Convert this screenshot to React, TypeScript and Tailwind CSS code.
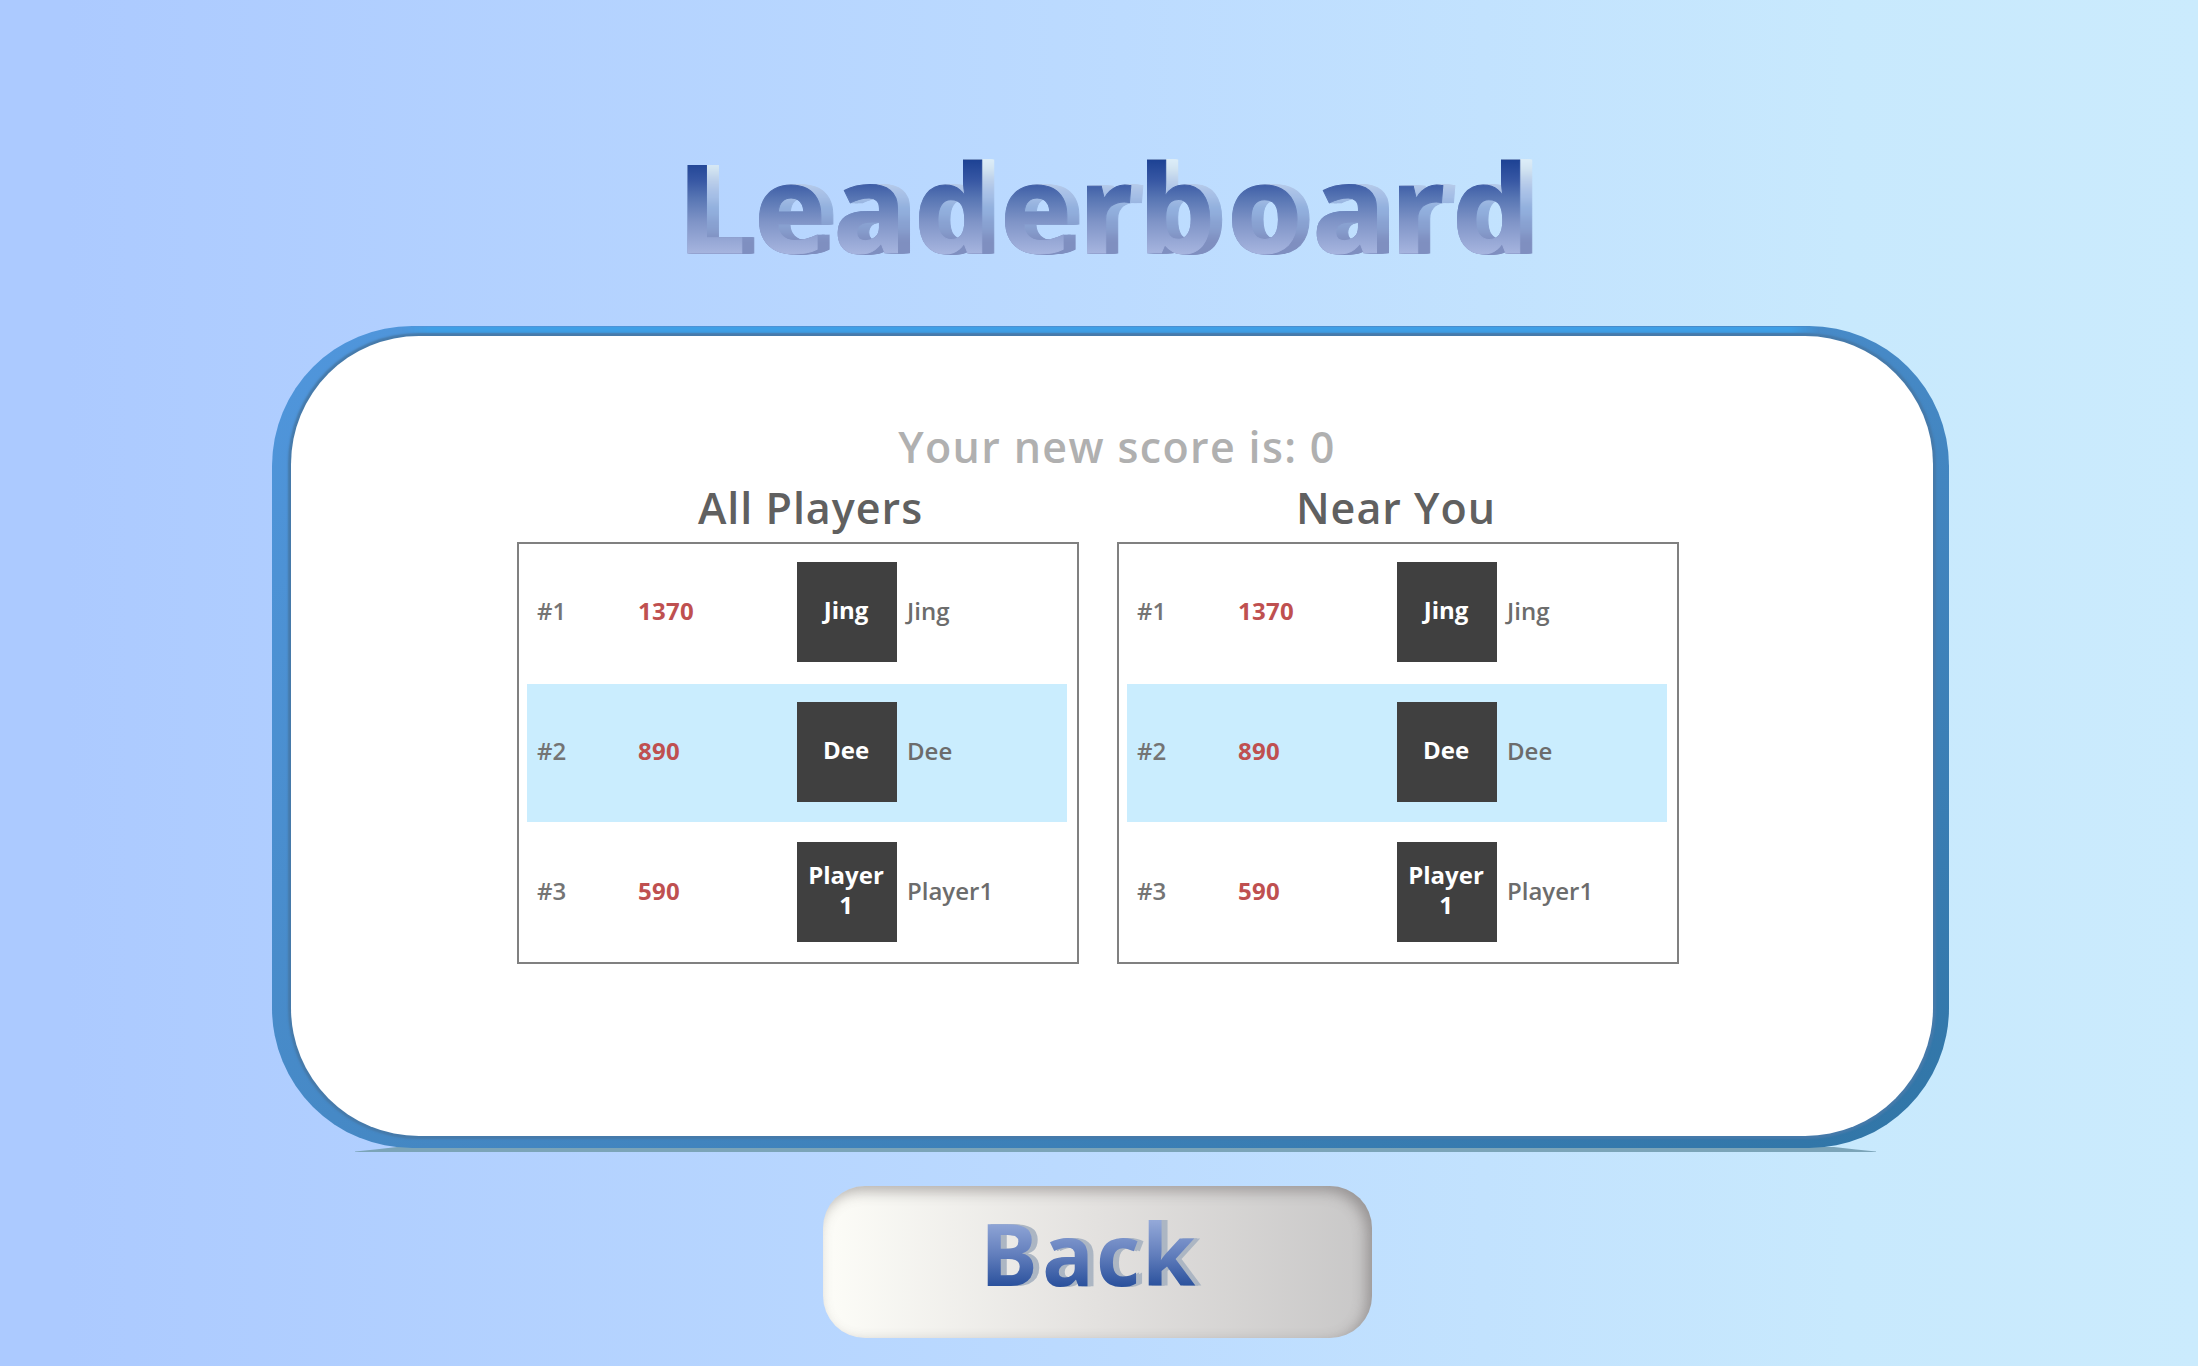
type Player = { rank: string; score: string; avatar: string[]; name: string; highlighted?: boolean };

const players: Player[] = [
  { rank: '#1', score: '1370', avatar: ['Jing'], name: 'Jing' },
  { rank: '#2', score: '890', avatar: ['Dee'], name: 'Dee', highlighted: true },
  { rank: '#3', score: '590', avatar: ['Player', '1'], name: 'Player1' },
];

// Colour bands of the title's side faces, from top to bottom; blurred into a gradient.
const sideBands = [
  { y: -40, h: 56, color: '#dcedf8' },
  { y: 16, h: 10, color: '#cfe1ef' },
  { y: 26, h: 12, color: '#b9cdea' },
  { y: 38, h: 14, color: '#a6bfe6' },
  { y: 52, h: 16, color: '#91afdd' },
  { y: 68, h: 16, color: '#88a0d0' },
  { y: 84, h: 96, color: '#7f8fc0' },
];

function Title() {
  return (
    <svg
      className="h-[176px] w-[880px] overflow-visible font-['Open_Sans',sans-serif] text-[122px] font-bold"
      viewBox="0 -30 880 176"
      role="img"
      aria-label="Leaderboard"
    >
      <defs>
        <linearGradient id="titleFace" gradientUnits="userSpaceOnUse" x1="0" y1="10" x2="0" y2="105">
          <stop offset="0" stopColor="#1d4294" />
          <stop offset="0.22" stopColor="#3858a4" />
          <stop offset="0.4" stopColor="#5775b3" />
          <stop offset="0.65" stopColor="#7f94c7" />
          <stop offset="1" stopColor="#a8b6e0" />
        </linearGradient>
        <filter
          id="titleDepth"
          filterUnits="userSpaceOnUse"
          x="-20"
          y="-40"
          width="920"
          height="220"
          colorInterpolationFilters="sRGB"
        >
          <feOffset in="SourceAlpha" dx="1" result="o1" />
          <feMerge result="w2"><feMergeNode in="SourceAlpha" /><feMergeNode in="o1" /></feMerge>
          <feOffset in="w2" dx="2" result="o2" />
          <feMerge result="w4"><feMergeNode in="w2" /><feMergeNode in="o2" /></feMerge>
          <feOffset in="w4" dx="4" result="o4" />
          <feMerge result="w8"><feMergeNode in="w4" /><feMergeNode in="o4" /></feMerge>
          <feOffset in="w8" dx="5" result="o5" />
          <feMerge result="extruded"><feMergeNode in="w8" /><feMergeNode in="o5" /></feMerge>
          {sideBands.map((b, i) => (
            <feFlood key={b.y} x="-20" y={b.y} width="920" height={b.h} floodColor={b.color} result={`band${i}`} />
          ))}
          <feMerge result="bands">
            {sideBands.map((b, i) => (
              <feMergeNode key={b.y} in={`band${i}`} />
            ))}
          </feMerge>
          <feGaussianBlur in="bands" stdDeviation="0 5" result="ramp" />
          <feComposite in="ramp" in2="extruded" operator="in" result="side" />
          <feMerge><feMergeNode in="side" /><feMergeNode in="SourceGraphic" /></feMerge>
        </filter>
      </defs>
      <text
        x="1 78 157 238 324 402 462 551 636 714 776"
        y="103"
        fill="url(#titleFace)"
        stroke="url(#titleFace)"
        strokeWidth="1"
        filter="url(#titleDepth)"
      >
        Leaderboard
      </text>
    </svg>
  );
}

function BackButton() {
  return (
    <button className="h-[152px] w-[549px] rounded-[42px] bg-linear-to-r from-[#fdfdf8] via-[#e3e1df] via-50% to-[#c8c7c7] shadow-[inset_-5px_5px_14px_rgba(80,74,74,0.42)]">
      <svg
        className="h-full w-full overflow-visible font-['Open_Sans',sans-serif] text-[86px] font-bold"
        viewBox="0 0 549 152"
        role="img"
        aria-label="Back"
      >
        <defs>
          <linearGradient id="backFace" gradientUnits="userSpaceOnUse" x1="0" y1="35" x2="0" y2="101">
            <stop offset="0" stopColor="#93a8d8" />
            <stop offset="0.5" stopColor="#637fbd" />
            <stop offset="1" stopColor="#29509c" />
          </linearGradient>
        </defs>
        <text
          className="[filter:drop-shadow(3px_0_0_#acb6c3)_drop-shadow(3px_0_0_#acb6c3)]"
          x="157 219 273 319"
          y="100"
          fill="url(#backFace)"
        >
          Back
        </text>
      </svg>
    </button>
  );
}

function Board({ title, titleClass }: { title: string; titleClass: string }) {
  return (
    <section className="w-[562px]">
      <h2
        className={`h-[59px] text-center text-[43px] leading-[49px] font-semibold tracking-[1px] text-[#606060] ${titleClass}`}
      >
        {title}
      </h2>
      <div className="h-[422px] border-2 border-[#808080] pr-[10px] pl-2">
        {players.map((p) => (
          <div key={p.rank} className="flex h-[140px] items-start">
            <div
              className={`grid h-[138px] w-full grid-cols-[101px_159px_100px_1fr] items-center pl-[10px] ${
                p.highlighted ? 'bg-[#caedfe]' : ''
              }`}
            >
              <span className="pb-1 text-[24px] font-semibold text-[#747474]">{p.rank}</span>
              <span className="pb-1 text-[24px] font-bold tracking-[0.3px] text-[#bf5050]">{p.score}</span>
              <div className="mb-0.5 flex h-[100px] flex-col items-center justify-center bg-[#404040] pr-0.5 pb-1 text-[24px] leading-[30px] font-bold text-white">
                {p.avatar.map((line) => (
                  <span key={line}>{line}</span>
                ))}
              </div>
              <span className="pb-1 pl-[10px] text-[24px] font-semibold text-[#6c6c6c]">{p.name}</span>
            </div>
          </div>
        ))}
      </div>
    </section>
  );
}

export default function App() {
  return (
    <main className="flex h-[1366px] w-[2198px] flex-col overflow-hidden bg-[linear-gradient(to_right,#accaff_3%,#bcdbff_51%,#c8e9fd_84%,#cbebfd)] pt-[120px] font-['Open_Sans',sans-serif]">
      <div className="ml-[676px] h-[206px]">
        <Title />
      </div>
      <div className="relative ml-[272px] h-[826px] w-[1677px]">
        <div className="absolute bottom-0 left-[83px] h-[5px] w-[1521px] bg-[#7ba4b8] [clip-path:polygon(0_90%,20px_50%,42px_0,calc(100%-42px)_0,calc(100%-20px)_50%,100%_90%,100%_100%,0_100%)]" />
        <div className="relative h-[822px] rounded-[140px] bg-linear-to-br from-[#5096dc] via-[#4689c6] to-[#3075a6] pt-[10px] pl-[19px]">
          <div className="absolute top-px right-[100px] left-[100px] h-[6px] bg-[#3f9fe6] [mask-image:linear-gradient(to_right,transparent_30px,black_60px,black_calc(100%-60px),transparent_calc(100%-30px))]" />
          <div className="relative h-[800px] w-[1642px] rounded-[128px] bg-white pt-[82px] shadow-[0_0_2px_3px_#467aaa]">
            <p className="h-[65px] pl-[10px] text-center text-[43px] leading-[58px] font-semibold tracking-[1.35px] text-[#b0b0b0]">
              Your new score is: 0
            </p>
            <div className="flex gap-[38px] pl-[226px]">
              <Board title="All Players" titleClass="pl-[25px]" />
              <Board title="Near You" titleClass="pr-[4px]" />
            </div>
          </div>
        </div>
      </div>
      <div className="mt-[34px] ml-[823px]">
        <BackButton />
      </div>
    </main>
  );
}
